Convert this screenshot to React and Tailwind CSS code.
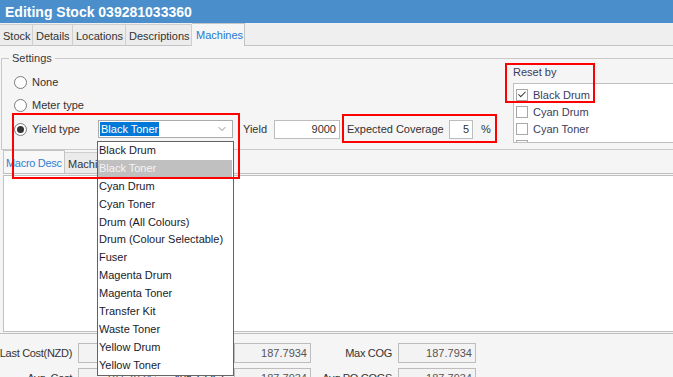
import React from 'react';
import { ChevronDown, Check } from 'lucide-react';

const topTabs = [
  { label: 'Stock', width: 'w-[33px]' },
  { label: 'Details', width: 'w-[40px]' },
  { label: 'Locations', width: 'w-[53px]' },
  { label: 'Descriptions', width: 'w-[66px]' },
];

const yieldTypes = [
  'Black Drum',
  'Black Toner',
  'Cyan Drum',
  'Cyan Toner',
  'Drum (All Colours)',
  'Drum (Colour Selectable)',
  'Fuser',
  'Magenta Drum',
  'Magenta Toner',
  'Transfer Kit',
  'Waste Toner',
  'Yellow Drum',
  'Yellow Toner',
];

const resetBy = [
  { label: 'Black Drum', checked: true },
  { label: 'Cyan Drum' },
  { label: 'Cyan Toner' },
  { label: 'Drum (All Colours)' },
];

const costRows = [
  ['Last Cost(NZD)', '187.7934', 'Last PO Cost', '187.7934', 'Max COG', '187.7934'],
  ['Avg. Cost', '187.7934', 'Avg. COGS', '187.7934', 'Avg PO COGS', '187.7934'],
];

const Radio = ({ checked }) => (
  <span className="w-[13px] h-[13px] rounded-full border border-[#7a7a7a] bg-white flex items-center justify-center shrink-0">
    {checked && <span className="w-[7px] h-[7px] rounded-full bg-[#333]" />}
  </span>
);

const ReadOnlyBox = ({ value, width }) => (
  <div className={`${width} h-[20px] border border-[#bdbdbd] bg-[#f3f3f3] flex items-center justify-end pr-[3px] text-[#555]`}>
    {value}
  </div>
);

const Label = ({ text, width }) => (
  <div className={`${width} shrink-0 flex justify-end whitespace-nowrap tracking-[-0.3px]`}>
    <span>{text}</span>
  </div>
);

const App = () => {
  return (
    <div className="relative w-[673px] h-[377px] overflow-hidden bg-[#f5f5f5] text-[11px] leading-[14px] text-[#333] font-['Liberation_Sans',Arial,sans-serif]">
      {/* title bar */}
      <div className="h-[23px] bg-[#4a8fcc] text-white font-bold text-[14px] pl-[5px] flex items-center">
        Editing Stock 039281033360
      </div>

      {/* main tabs */}
      <div className="h-[23px] bg-[#efefef] flex items-end">
        {topTabs.map(t => (
          <div
            key={t.label}
            className={`${t.width} h-[22px] border-t border-r border-b border-[#cfcfcf] border-b-[#c4c4c4] bg-[#ececec] pl-[3px] pt-[2px] flex items-center whitespace-nowrap text-[#333]`}
          >
            {t.label}
          </div>
        ))}
        <div className="w-[53px] h-[23px] border-t border-r border-[#c4c4c4] bg-[#f5f5f5] pl-[4px] flex items-center text-[#1e78d2]">
          Machines
        </div>
        <div className="flex-1 h-[22px] border-b border-[#c4c4c4]" />
      </div>

      {/* settings group */}
      <fieldset className="ml-[1px] mt-[5px] w-[700px] h-[99px] border border-[#c8c8c8]">
        <legend className="ml-[7px] px-[3px] leading-[14px] text-[#3a3a3a]">Settings</legend>
        <div className="flex">
          <div className="w-[511px] pl-[12px] pt-[7px]">
            <div className="h-[20px] flex items-center">
              <Radio />
              <span className="ml-[5px]">None</span>
            </div>
            <div className="h-[20px] mt-[3px] flex items-center">
              <Radio />
              <span className="ml-[5px]">Meter type</span>
            </div>
            <div className="h-[20px] mt-[4px] flex items-center whitespace-nowrap">
              <Radio checked />
              <span className="ml-[5px] w-[66px]">Yield type</span>
              <div className="w-[135px] h-[18px] border border-[#ababab] bg-white flex items-center">
                <span className="ml-[1px] px-[1px] h-[14px] bg-[#0078d7] text-white">Black Toner</span>
                <ChevronDown className="ml-auto mr-[4px] text-[#666]" size={12} strokeWidth={1.5} />
              </div>
              <span className="ml-[10px] w-[31px]">Yield</span>
              <div className="w-[66px] h-[19px] border border-[#bdbdbd] bg-white flex items-center justify-end pr-[3px]">
                9000
              </div>
              <span className="ml-[7px] w-[102px]">Expected Coverage</span>
              <div className="w-[24px] h-[19px] border border-[#bdbdbd] bg-white flex items-center justify-end pr-[3px]">
                5
              </div>
              <span className="ml-[8px]">%</span>
            </div>
          </div>

          <div className="flex-1">
            <div className="leading-[14px] text-[#3c3c5a]">Reset by</div>
            <div className="mt-[4px] h-[60px] border border-[#c0c0c0] bg-white pt-[2px] overflow-hidden">
              {resetBy.map(r => (
                <div key={r.label} className="h-[17px] pl-[2px] flex items-center whitespace-nowrap text-[#3c3c5a]">
                  <span className="w-[12px] h-[12px] border border-[#a8a8a8] bg-white flex items-center justify-center">
                    {r.checked && <Check size={11} strokeWidth={2.5} className="text-[#333]" />}
                  </span>
                  <span className="ml-[5px]">{r.label}</span>
                </div>
              ))}
            </div>
          </div>
        </div>
      </fieldset>

      {/* lower tabs */}
      <div className="h-[23px] pl-[3px] flex items-end">
        <div className="w-[62px] h-[23px] border-l border-t border-r border-[#c4c4c4] bg-[#f8f8f8] pl-[2px] pt-[2px] flex items-center whitespace-nowrap overflow-hidden tracking-[-0.3px] text-[#2f80d0]">
          Macro Desc
        </div>
        <div className="w-[56px] h-[21px] border-t border-r border-[#cfcfcf] bg-[#ebebeb] pl-[3px] pt-[2px] flex items-center whitespace-nowrap overflow-hidden">
          Machines
        </div>
      </div>
      <div className="h-[2px] ml-[3px] border-t border-[#c0c0c0]" />
      <div className="ml-[3px] h-[157px] bg-white border-t border-l border-b border-[#c0c0c0]" />
      <div className="mt-[1px] h-[1px] border-t border-[#c0c0c0]" />

      {/* cost fields */}
      <div className="pt-[9px]">
        {costRows.map((row, i) => (
          <div key={row[0]} className={`flex items-center ${i > 0 ? 'mt-[5px]' : ''}`}>
            <Label text={row[0]} width="w-[72px]" />
            <div className="ml-[6px]"><ReadOnlyBox value={row[1]} width="w-[78px]" /></div>
            <Label text={row[2]} width="w-[72px]" />
            <div className="ml-[6px]"><ReadOnlyBox value={row[3]} width="w-[77px]" /></div>
            <Label text={row[4]} width="w-[81px]" />
            <div className="ml-[6px]"><ReadOnlyBox value={row[5]} width="w-[78px]" /></div>
          </div>
        ))}
      </div>

      {/* open dropdown list */}
      <div className="absolute left-[97px] top-[141px] w-[137px] border border-[#646464] bg-white">
        {yieldTypes.map(y => (
          <div
            key={y}
            className={`h-[17.9px] pl-[1px] pb-[2px] flex items-center whitespace-nowrap ${
              y === 'Black Toner' ? 'bg-[#c0c0c0] text-[#f4f4f4] mr-[1px]' : 'text-[#1a1a2a]'
            }`}
          >
            {y}
          </div>
        ))}
      </div>

      {/* annotation boxes */}
      <div className="absolute left-[12px] top-[113px] w-[228px] h-[66px] border-2 border-[#ff0000]" />
      <div className="absolute left-[342px] top-[114px] w-[155px] h-[29px] border-2 border-[#ff0000]" />
      <div className="absolute left-[505px] top-[63px] w-[90px] h-[40px] border-2 border-[#ff0000]" />
    </div>
  );
};

export default App;
